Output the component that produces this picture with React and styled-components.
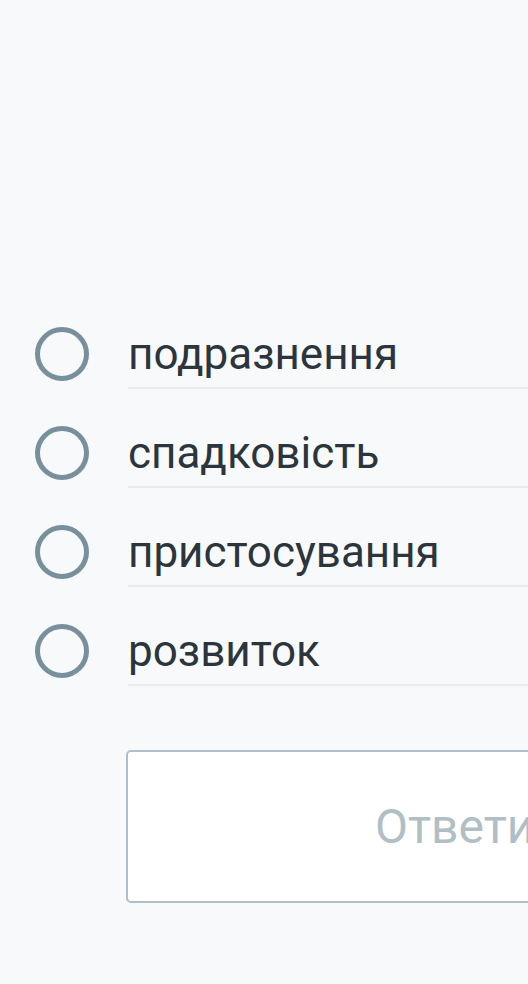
import React from 'react';
import styled, { createGlobalStyle } from 'styled-components';

const Global = createGlobalStyle`
  html, body {
    margin: 0;
    padding: 0;
    background: #f7f9fb;
  }
`

const Page = styled.div`
  width: 528px;
  height: 984px;
  overflow: hidden;
  background: #f7f9fb;
  font-family: Roboto, "Noto Sans", sans-serif;
  padding-top: 321px;
  box-sizing: border-box;
`

const List = styled.div`
  display: flex;
  flex-direction: column;
  gap: 31px;
`

const Option = styled.label`
  display: flex;
  align-items: stretch;
  height: 68px;
`

const RadioCol = styled.div`
  width: 128px;
  flex: none;
  display: flex;
  align-items: center;
  padding-left: 35px;
  padding-bottom: 2px;
  box-sizing: border-box;
`

const Radio = styled.span`
  width: 54px;
  height: 54px;
  border-radius: 50%;
  border: 5px solid #78909c;
  box-sizing: border-box;
`

const Label = styled.div`
  flex: 1;
  display: flex;
  align-items: center;
  font-size: 44px;
  color: #2b353b;
  border-bottom: 2px solid #e8ecef;
  white-space: nowrap;
  overflow: hidden;
`

const Footer = styled.div`
  padding: 64px 0 0 126px;
`

const Button = styled.button`
  width: 560px;
  height: 153px;
  background: #fff;
  border: 2px solid #b0bec5;
  border-radius: 5px;
  font-family: Roboto, "Noto Sans", sans-serif;
  font-size: 48px;
  color: #b0bec5;
  text-align: left;
  padding: 0 0 0 247px;
  box-sizing: border-box;
`

const answers = ['подразнення', 'спадковість', 'пристосування', 'розвиток'];

export default () => {
  return (
    <Page>
      <Global />
      <List>
        {answers.map(a => (
          <Option key={a}>
            <RadioCol><Radio /></RadioCol>
            <Label>{a}</Label>
          </Option>
        ))}
      </List>
      <Footer>
        <Button disabled>Ответить</Button>
      </Footer>
    </Page>
  )
}
